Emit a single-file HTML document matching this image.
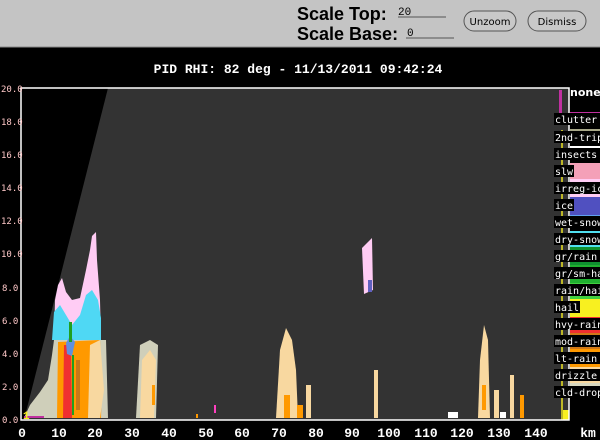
<!DOCTYPE html>
<html><head><meta charset="utf-8"><style>
html,body{margin:0;padding:0;width:600px;height:440px;overflow:hidden;background:#000}
svg{display:block}
.lg{font-family:"DejaVu Sans Mono","Liberation Mono",monospace;font-size:10px;fill:#fff}
</style></head><body>
<svg width="600" height="440" viewBox="0 0 600 440" xmlns="http://www.w3.org/2000/svg">
<rect x="0" y="0" width="600" height="47" fill="#c4c4c4"/>
<line x1="0" y1="47" x2="600" y2="47" stroke="#888"/>
<text x="297" y="20" font-family="Liberation Sans,sans-serif" font-weight="bold" font-size="18" fill="#000">Scale Top:</text>
<text x="297" y="40" font-family="Liberation Sans,sans-serif" font-weight="bold" font-size="18" fill="#000">Scale Base:</text>
<text x="398" y="15" font-family="Liberation Mono,monospace" font-size="11" fill="#000">20</text>
<line x1="398" y1="17" x2="446" y2="17" stroke="#555"/>
<text x="407" y="36" font-family="Liberation Mono,monospace" font-size="11" fill="#000">0</text>
<line x1="406" y1="38" x2="454" y2="38" stroke="#555"/>
<rect x="464" y="11" width="52" height="20" rx="10" fill="#c8c8c8" stroke="#555"/>
<text x="490" y="25" text-anchor="middle" font-family="DejaVu Sans,sans-serif" font-size="10" fill="#000">Unzoom</text>
<rect x="528" y="11" width="58" height="20" rx="10" fill="#c8c8c8" stroke="#555"/>
<text x="557" y="25" text-anchor="middle" font-family="DejaVu Sans,sans-serif" font-size="10" fill="#000">Dismiss</text>
<text x="298" y="73" text-anchor="middle" font-family="Liberation Mono,monospace" font-weight="bold" font-size="13" fill="#fff">PID  RHI: 82 deg  -  11/13/2011 09:42:24</text>
<rect x="21" y="88" width="548" height="332" fill="#333"/>
<polygon points="21,88 108,88 24,420 21,420" fill="#000"/>
<!-- main storm -->
<polygon points="24,418 30,405 40,392 48,380 52,355 54,340 106,340 108,418" fill="#cfcfba"/>
<polygon points="54,340 55,300 58,285 62,278 66,292 72,300 80,298 86,270 90,250 92,236 96,232 97,260 100,300 101,340" fill="#ffccf4"/>
<polygon points="52,340 54,312 60,305 66,315 72,325 80,315 86,295 92,290 98,300 101,318 101,340" fill="#4fd8f4"/>
<polygon points="57,418 58,342 100,340 102,380 101,418" fill="#ff9900"/>
<polygon points="88,418 90,345 100,340 104,390 100,418" fill="#f8d8a0"/>
<polygon points="63,418 64,345 71,345 72,418" fill="#f03030"/>
<polygon points="66,343 70,336 75,342 72,356 67,354" fill="#6090e0"/>
<rect x="69" y="322" width="3" height="20" fill="#20a020"/>
<rect x="72" y="355" width="2" height="60" fill="#20a020"/>
<rect x="76" y="360" width="4" height="50" fill="#c87818"/>
<!-- 30 km -->
<polygon points="136,418 140,345 150,340 158,345 156,418" fill="#cfcfba"/>
<polygon points="140,418 142,360 150,350 156,360 154,418" fill="#f8d8a0"/>
<rect x="152" y="385" width="3" height="20" fill="#ff9900"/>
<!-- 70 km -->
<polygon points="276,418 280,350 286,328 292,340 296,370 298,418" fill="#f8d8a0"/>
<rect x="284" y="395" width="6" height="23" fill="#ff9900"/>
<rect x="297" y="405" width="6" height="13" fill="#ff9900"/>
<rect x="306" y="385" width="5" height="33" fill="#f8d8a0"/>
<rect x="374" y="370" width="4" height="48" fill="#f8d8a0"/>
<polygon points="362,248 372,238 373,290 364,294" fill="#ffccf4"/>
<rect x="368" y="280" width="4" height="12" fill="#6060c0"/>
<polygon points="478,418 480,360 484,325 488,340 490,418" fill="#f8d8a0"/>
<rect x="482" y="385" width="4" height="25" fill="#ff9900"/>
<rect x="494" y="390" width="5" height="28" fill="#f8d8a0"/>
<rect x="510" y="375" width="4" height="43" fill="#f8d8a0"/>
<rect x="520" y="395" width="4" height="23" fill="#ff9900"/>
<rect x="448" y="412" width="10" height="6" fill="#fff"/>
<rect x="500" y="412" width="6" height="6" fill="#fff"/>
<rect x="214" y="405" width="2" height="8" fill="#ff40c0"/>
<rect x="196" y="414" width="2" height="4" fill="#ff9900"/>
<rect x="24" y="416" width="20" height="2" fill="#c030a0"/>
<rect x="559" y="90" width="3" height="30" fill="#c030a0"/>
<rect x="561" y="130" width="2" height="290" fill="#f8f020" opacity="0.7"/>
<rect x="563" y="410" width="6" height="10" fill="#f8f020"/>
<rect x="21" y="88" width="548" height="332" fill="none" stroke="#fff" stroke-width="1.5"/>
<g font-family="DejaVu Sans Mono,monospace" font-size="9" fill="#ffc8c8">
<text x="1" y="92">20.0</text><text x="1" y="125">18.0</text><text x="1" y="158">16.0</text><text x="1" y="191">14.0</text><text x="1" y="224">12.0</text><text x="1" y="257">10.0</text><text x="2" y="291">8.0</text><text x="2" y="324">6.0</text><text x="2" y="357">4.0</text><text x="2" y="390">2.0</text><text x="2" y="423">0.0</text>
</g>
<text x="23" y="419" font-family="Liberation Mono,monospace" font-weight="bold" font-size="11" fill="#f8f020">1</text>
<g font-family="Liberation Mono,monospace" font-weight="bold" font-size="13" fill="#fff" text-anchor="middle">
<text x="22" y="437">0</text><text x="59" y="437">10</text><text x="95" y="437">20</text><text x="132" y="437">30</text><text x="169" y="437">40</text><text x="206" y="437">50</text><text x="242" y="437">60</text><text x="279" y="437">70</text><text x="316" y="437">80</text><text x="352" y="437">90</text><text x="389" y="437">100</text><text x="426" y="437">110</text><text x="462" y="437">120</text><text x="499" y="437">130</text><text x="536" y="437">140</text><text x="588" y="437">km</text>
</g>
<rect x="570" y="112" width="30" height="9" fill="#c030a0"/>
<rect x="570" y="129" width="30" height="8" fill="#a8a888"/>
<rect x="570" y="146" width="30" height="8" fill="#fff"/>
<rect x="570" y="163" width="30" height="16" fill="#f4a0b8"/>
<rect x="570" y="179" width="30" height="18" fill="#ffccf4"/>
<rect x="570" y="197" width="30" height="18" fill="#5050c0"/>
<rect x="570" y="215" width="30" height="8" fill="#60a0f0"/>
<rect x="570" y="231" width="30" height="16" fill="#50e0f0"/>
<rect x="570" y="247" width="30" height="18" fill="#109030"/>
<rect x="570" y="265" width="30" height="18" fill="#20b030"/>
<rect x="570" y="283" width="30" height="16" fill="#40d040"/>
<rect x="570" y="299" width="30" height="18" fill="#f8f020"/>
<rect x="570" y="317" width="30" height="16" fill="#f03030"/>
<rect x="570" y="333" width="30" height="16" fill="#d07818"/>
<rect x="570" y="349" width="30" height="18" fill="#ff9900"/>
<rect x="570" y="367" width="30" height="16" fill="#f8d8a0"/>
<rect x="570" y="383" width="30" height="12" fill="#d8d8c0"/>
<text x="570" y="96" font-family="DejaVu Sans,sans-serif" font-weight="bold" font-size="11" fill="#fff">none</text>
<g class="lg">
<rect x="554" y="113" width="46" height="12" fill="#000"/><text x="555" y="123">clutter</text>
<rect x="554" y="131" width="46" height="12" fill="#000"/><text x="555" y="141">2nd-trip</text>
<rect x="554" y="148" width="46" height="12" fill="#000"/><text x="555" y="158">insects</text>
<rect x="554" y="165" width="20" height="12" fill="#000"/><text x="555" y="175">slw</text>
<rect x="554" y="182" width="46" height="12" fill="#000"/><text x="555" y="192">irreg-ice</text>
<rect x="554" y="199" width="20" height="12" fill="#000"/><text x="555" y="209">ice</text>
<rect x="554" y="216" width="46" height="12" fill="#000"/><text x="555" y="226">wet-snow</text>
<rect x="554" y="233" width="46" height="12" fill="#000"/><text x="555" y="243">dry-snow</text>
<rect x="554" y="250" width="46" height="12" fill="#000"/><text x="555" y="260">gr/rain</text>
<rect x="554" y="267" width="46" height="12" fill="#000"/><text x="555" y="277">gr/sm-ha</text>
<rect x="554" y="284" width="46" height="12" fill="#000"/><text x="555" y="294">rain/hai</text>
<rect x="554" y="301" width="26" height="12" fill="#000"/><text x="555" y="311">hail</text>
<rect x="554" y="318" width="46" height="12" fill="#000"/><text x="555" y="328">hvy-rain</text>
<rect x="554" y="335" width="46" height="12" fill="#000"/><text x="555" y="345">mod-rain</text>
<rect x="554" y="352" width="46" height="12" fill="#000"/><text x="555" y="362">lt-rain</text>
<rect x="554" y="369" width="46" height="12" fill="#000"/><text x="555" y="379">drizzle</text>
<rect x="554" y="386" width="46" height="12" fill="#000"/><text x="555" y="396">cld-drop</text>
</g>
</svg>
</body></html>
